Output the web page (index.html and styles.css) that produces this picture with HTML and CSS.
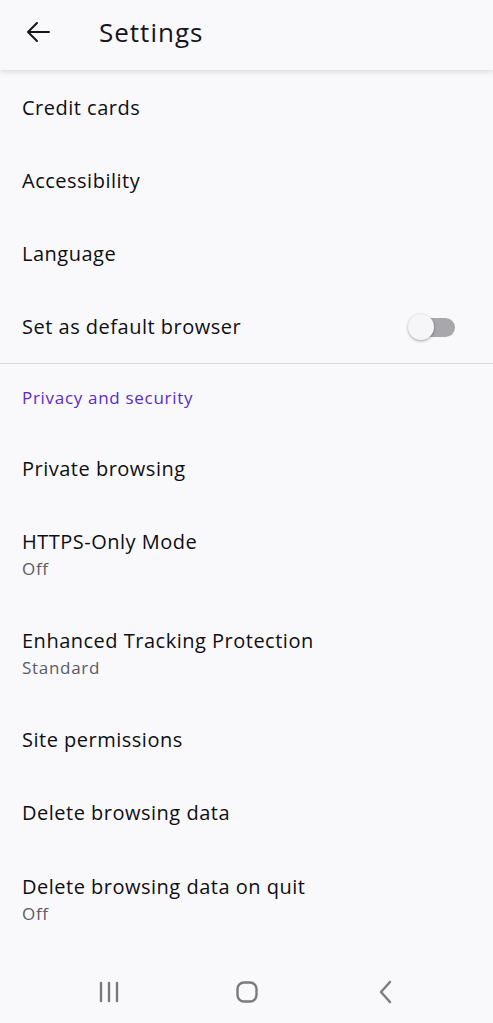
FILE: index.html
```html
<!DOCTYPE html>
<html lang="en">
<head>
    <meta charset="UTF-8">
    <title>Settings</title>
    <link rel="stylesheet" href="styles.css">
</head>
<body>
    <header class="toolbar">
        <svg class="back" width="28" height="28" viewBox="0 0 28 28">
            <path d="M25 14H4M13 5l-9 9 9 9" fill="none" stroke="#15141a" stroke-width="2" stroke-linecap="round" stroke-linejoin="round"/>
        </svg>
        <h1>Settings</h1>
    </header>

    <main class="list">
        <div class="row"><span class="title">Credit cards</span></div>
        <div class="row"><span class="title">Accessibility</span></div>
        <div class="row"><span class="title">Language</span></div>
        <div class="row switch-row">
            <span class="title">Set as default browser</span>
            <span class="switch"><span class="thumb"></span></span>
        </div>

        <div class="section">Privacy and security</div>
        <div class="row"><span class="title">Private browsing</span></div>
        <div class="row two">
            <span class="title">HTTPS-Only Mode</span>
            <span class="sub">Off</span>
        </div>
        <div class="row two">
            <span class="title">Enhanced Tracking Protection</span>
            <span class="sub">Standard</span>
        </div>
        <div class="row"><span class="title">Site permissions</span></div>
        <div class="row"><span class="title">Delete browsing data</span></div>
        <div class="row two">
            <span class="title">Delete browsing data on quit</span>
            <span class="sub">Off</span>
        </div>
    </main>

    <nav class="navbar">
        <svg width="24" height="24" viewBox="0 0 24 24">
            <path d="M4 3v18M12 3v18M20 3v18" stroke="#7a7a7e" stroke-width="2.4" stroke-linecap="round"/>
        </svg>
        <svg width="24" height="24" viewBox="0 0 24 24">
            <rect x="2.5" y="2.5" width="19" height="19" rx="6.5" fill="none" stroke="#7a7a7e" stroke-width="2.4"/>
        </svg>
        <svg width="24" height="24" viewBox="0 0 24 24">
            <path d="M17 2l-9 10 9 10" fill="none" stroke="#7a7a7e" stroke-width="2.4" stroke-linecap="round" stroke-linejoin="round"/>
        </svg>
    </nav>
</body>
</html>
```

FILE: styles.css
```css
body {
    margin: 0;
    width: 493px;
    height: 1023px;
    font-family: 'Open Sans', 'Noto Sans', sans-serif;
    background-color: #f9f9fb;
    color: #15141a;
    display: flex;
    flex-direction: column;
    overflow: hidden;
}

.toolbar {
    height: 70px;
    flex-shrink: 0;
    display: flex;
    align-items: center;
    padding-left: 24px;
    padding-bottom: 6px;
    box-sizing: border-box;
    background-color: #f9f9fb;
    box-shadow: 0 2px 5px rgba(0,0,0,0.12);
    position: relative;
    z-index: 1;
}

.toolbar .back {
    margin-right: 47px;
}

.toolbar h1 {
    margin: 0;
    font-size: 26px;
    font-weight: 500;
    letter-spacing: 1px;
}

.list {
    flex: 1;
    padding-top: 1px;
}

.row {
    height: 73.3px;
    padding: 0 22px;
    display: flex;
    flex-direction: column;
    justify-content: center;
    box-sizing: border-box;
}

.row.two {
    height: 99px;
    padding-top: 25px;
    padding-bottom: 22px;
    justify-content: flex-start;
}

.title {
    font-size: 20px;
    line-height: 24px;
    letter-spacing: 0.5px;
    color: #0f0e14;
}

.sub {
    font-size: 17px;
    line-height: 22px;
    margin-top: 4px;
    letter-spacing: 0.7px;
    color: #5b5b66;
}

.switch-row {
    flex-direction: row;
    align-items: center;
    justify-content: space-between;
    border-bottom: 1px solid #d8d8dc;
}

.switch {
    width: 40px;
    height: 19px;
    margin-right: 16px;
    border-radius: 10px;
    background-color: #a8a8ac;
    position: relative;
}

.thumb {
    position: absolute;
    left: -7px;
    top: -4px;
    width: 26px;
    height: 26px;
    border-radius: 50%;
    background-color: #f6f6f8;
    box-shadow: 0 1px 3px rgba(0,0,0,0.35);
}

.section {
    height: 68px;
    padding: 0 22px 2px;
    box-sizing: border-box;
    display: flex;
    align-items: center;
    font-size: 17px;
    letter-spacing: 0.7px;
    color: #592acb;
}

.navbar {
    height: 63px;
    flex-shrink: 0;
    display: flex;
    justify-content: center;
    align-items: center;
    gap: 114px;
}
```
